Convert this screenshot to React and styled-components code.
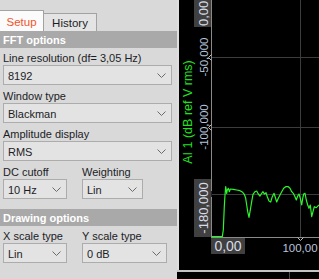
import React from "react";
import styled, { createGlobalStyle } from "styled-components";

const GlobalStyle = createGlobalStyle`
  html, body {
    margin: 0;
    padding: 0;
    background: #000;
    overflow: hidden;
  }
  body {
    font-family: "Liberation Sans", Arial, sans-serif;
  }
`;

// green spectrum trace, sampled from the screen (3x scale, offset 175/140)
const TRACE = [
  [110, 290], [142, 290], [145, 270], [148, 200], [150, 165], [152, 140],
  [155, 160], [157, 150], [160, 145], [163, 155], [166, 147], [175, 148],
  [185, 150], [195, 152], [203, 157], [208, 163], [212, 175], [215, 195],
  [218, 215], [222, 232], [226, 210], [230, 185], [234, 163], [240, 155],
  [245, 153], [250, 162], [255, 168], [260, 160], [264, 155], [268, 162],
  [273, 158], [277, 170], [282, 183], [287, 186], [292, 170], [297, 160],
  [301, 172], [305, 186], [310, 175], [315, 165], [320, 155], [326, 145],
  [332, 140], [340, 140], [345, 145], [350, 155], [355, 160], [360, 170],
  [364, 180], [368, 168], [372, 162], [376, 175], [380, 195], [383, 175],
  [386, 162], [390, 160], [394, 180], [398, 195], [402, 205], [406, 195],
  [410, 230], [414, 215], [418, 200], [424, 203], [432, 195],
];

function Chevron() {
  return (
    <ChevronSvg width="9" height="5" viewBox="0 0 9 5">
      <polyline points="0.5,0.5 4.5,4.5 8.5,0.5" fill="none" stroke="#6b6b6b" strokeWidth="1" />
    </ChevronSvg>
  );
}

function Field({ label, value, w }) {
  return (
    <FieldBox $w={w}>
      <Label>{label}</Label>
      <Select>
        <SelectText>{value}</SelectText>
        <Chevron />
      </Select>
    </FieldBox>
  );
}

function Plot() {
  const pts = TRACE.map(([sx, sy]) => `${(sx / 3 - 4).toFixed(1)},${(140 + sy / 3).toFixed(1)}`).join(" ");
  return (
    <PlotSvg width="140" height="270" viewBox="0 0 140 270">
      {/* grid */}
      <line x1="32" y1="57.5" x2="140" y2="57.5" stroke="#3c3c3c" />
      <line x1="32" y1="127.5" x2="140" y2="127.5" stroke="#3c3c3c" />
      <line x1="32" y1="194.5" x2="140" y2="194.5" stroke="#3c3c3c" />
      <line x1="121.5" y1="0" x2="121.5" y2="237" stroke="#3c3c3c" />
      {/* axes */}
      <line x1="32.5" y1="0" x2="32.5" y2="237" stroke="#8a8a8a" />
      <line x1="32" y1="237.5" x2="140" y2="237.5" stroke="#8a8a8a" />
      <polyline points="32.5,54.5 29.5,57.5 32.5,60.5" fill="none" stroke="#bbbbbb" />
      <polyline points="32.5,124.5 29.5,127.5 32.5,130.5" fill="none" stroke="#bbbbbb" />
      <polyline points="118.5,237.5 121.5,240.5 124.5,237.5" fill="none" stroke="#bbbbbb" />

      {/* axis title */}
      <text transform="translate(12.5,112) rotate(-90)" textAnchor="middle" fontSize="12.5" fill="#1fe31f">
        AI 1 (dB ref V rms)
      </text>

      {/* y tick labels */}
      <text transform="translate(29,57) rotate(-90)" textAnchor="middle" fontSize="11.5" fill="#b8c4dc">-50,000</text>
      <text transform="translate(29,127) rotate(-90)" textAnchor="middle" fontSize="11.5" fill="#b8c4dc">-100,000</text>

      {/* cursor value boxes */}
      <rect x="15" y="0" width="17" height="27" fill="#404040" />
      <text transform="translate(28.5,26) rotate(-90)" fontSize="13" fill="#d8dce6">0,00</text>
      <rect x="30" y="191" width="3" height="6" fill="#222" />
      <rect x="15" y="179" width="17" height="58" fill="#404040" />
      <text transform="translate(28.5,208) rotate(-90)" textAnchor="middle" fontSize="13" fill="#d8dce6">-180,000</text>

      <polyline points={pts} fill="none" stroke="#2cf52c" strokeWidth="1.2" strokeLinejoin="round" />

      {/* x tick labels */}
      <rect x="32" y="238" width="34" height="16" fill="#404040" />
      <text x="49" y="251" textAnchor="middle" fontSize="14" fill="#d8dce6">0,00</text>
      <text x="121" y="251.5" textAnchor="middle" fontSize="11.5" fill="#b8c4dc">100,00</text>
    </PlotSvg>
  );
}

export default function App() {
  return (
    <>
      <GlobalStyle />
      <Screen>
        <Panel>
          <TabStrip>
            <Tab $w={44} $active>Setup</Tab>
            <Tab $w={53}>History</Tab>
          </TabStrip>

          <SectionHeader>FFT options</SectionHeader>
          <Body>
            <Field label="Line resolution (df= 3,05 Hz)" value="8192" />
            <Field label="Window type" value="Blackman" />
            <Field label="Amplitude display" value="RMS" />
            <Row>
              <Field label="DC cutoff" value="10 Hz" w={64} />
              <Field label="Weighting" value="Lin" w={61} />
            </Row>
          </Body>

          <SectionHeader $gap={9}>Drawing options</SectionHeader>
          <Body>
            <Row>
              <Field label="X scale type" value="Lin" w={64} />
              <Field label="Y scale type" value="0 dB" w={85} />
            </Row>
          </Body>
        </Panel>

        <RightColumn>
          <TopRow>
            <Splitter />
            <Plot />
          </TopRow>
          <HDivider />
          <BottomStrip>
            <BottomCell />
          </BottomStrip>
        </RightColumn>
      </Screen>
    </>
  );
}

const Screen = styled.div`
  display: flex;
  width: 319px;
  height: 279px;
  overflow: hidden;
`;

const Panel = styled.div`
  width: 177px;
  flex: none;
  display: flex;
  flex-direction: column;
  background: #d9d9d9;
  color: #1c1c26;
  font-size: 11px;
`;

const TabStrip = styled.div`
  display: flex;
  align-items: flex-end;
  height: 31px;
`;

const Tab = styled.div`
  box-sizing: border-box;
  width: ${(p) => p.$w}px;
  height: ${(p) => (p.$active ? 21 : 18)}px;
  display: flex;
  align-items: center;
  justify-content: center;
  padding-top: ${(p) => (p.$active ? 1 : 0)}px;
  background: ${(p) => (p.$active ? "#fbfbfb" : "#e4e4e4")};
  border-top: 1px solid #a2a2a2;
  border-right: 1px solid #a2a2a2;
  color: ${(p) => (p.$active ? "#f4532a" : "#1c1c26")};
  font-size: 11.5px;
`;

const SectionHeader = styled.div`
  height: 17px;
  margin-top: ${(p) => p.$gap || 0}px;
  padding: 1px 0 0 3px;
  box-sizing: border-box;
  line-height: 16px;
  background: #a9a9a9;
  color: #fff;
  font-weight: bold;
  font-size: 11px;
`;

const Body = styled.div`
  display: flex;
  flex-direction: column;
  padding: 0 5px 0 3px;
`;

const Row = styled.div`
  display: flex;
  gap: 15px;
`;

const FieldBox = styled.div`
  display: flex;
  flex-direction: column;
  width: ${(p) => (p.$w ? `${p.$w}px` : "auto")};
  margin-bottom: 1px;
`;

const Label = styled.div`
  height: 17px;
  box-sizing: border-box;
  padding-top: 4px;
  line-height: 13px;
  white-space: nowrap;
`;

const Select = styled.div`
  box-sizing: border-box;
  height: 20px;
  display: flex;
  align-items: center;
  justify-content: space-between;
  padding: 0 5px 0 4px;
  background: #e3e3e3;
  border: 1px solid #acacac;
`;

const SelectText = styled.span`
  padding-top: 2px;
  line-height: 13px;
`;

const ChevronSvg = styled.svg`
  display: block;
  flex: none;
`;

const RightColumn = styled.div`
  flex: 1;
  display: flex;
  flex-direction: column;
  background: #000;
`;

const TopRow = styled.div`
  display: flex;
  height: 270px;
  flex: none;
`;

const Splitter = styled.div`
  width: 2px;
  background: #dedede;
`;

const PlotSvg = styled.svg`
  display: block;
  background: #000;
  font-family: "Liberation Sans", Arial, sans-serif;
`;

const HDivider = styled.div`
  height: 2px;
  background: #c4c4c4;
`;

const BottomStrip = styled.div`
  flex: 1;
  display: flex;
  background: #000;
`;

const BottomCell = styled.div`
  width: 112px;
  border-right: 1px solid #4a4a4a;
`;
